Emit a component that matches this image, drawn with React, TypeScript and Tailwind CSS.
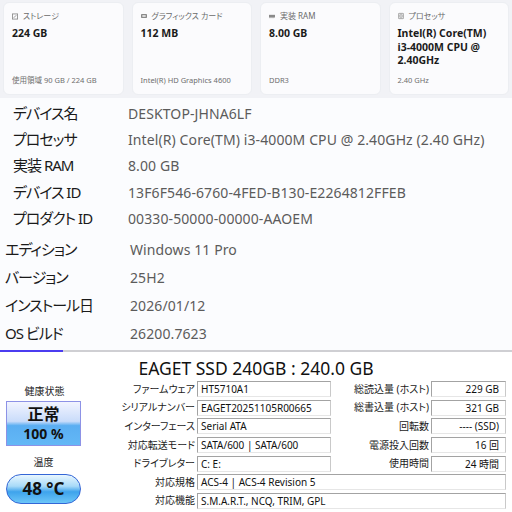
import React from "react";

const F = { fontFamily: '"Noto Sans", "Noto Sans CJK JP", sans-serif' };

function IconStorage() {
  return (
    <svg width="7" height="7" viewBox="0 0 7 7">
      <rect x="0.5" y="0.5" width="6" height="6" fill="none" stroke="#8a8a8a" />
      <path d="M2 5 L5 2" stroke="#8a8a8a" />
    </svg>
  );
}
function IconGpu() {
  return (
    <svg width="9" height="6" viewBox="0 0 9 6">
      <rect x="0" y="0" width="9" height="6" rx="1" fill="#8a8a8a" />
      <rect x="2" y="1.5" width="5" height="3" fill="#d8d8d8" />
    </svg>
  );
}
function IconRam() {
  return (
    <svg width="9" height="5" viewBox="0 0 9 5">
      <rect x="0" y="0" width="9" height="4" fill="#8a8a8a" />
      <path d="M1 4v1M3 4v1M5 4v1M7 4v1" stroke="#8a8a8a" />
    </svg>
  );
}
function IconCpu() {
  return (
    <svg width="8" height="8" viewBox="0 0 8 8">
      <rect x="0.5" y="0.5" width="7" height="7" rx="1" fill="none" stroke="#8a8a8a" />
      <rect x="2.5" y="2.5" width="3" height="3" fill="none" stroke="#8a8a8a" />
    </svg>
  );
}

function Card({
  icon,
  label,
  value,
  sub,
}: {
  icon: React.ReactNode;
  label: string;
  value: React.ReactNode;
  sub: string;
}) {
  return (
    <div className="h-[93px] rounded-[6px] bg-[#fbfbfd] border border-[#eceef2] flex flex-col pl-[8px] pt-[7px] pb-[8px]">
      <div className="flex items-center gap-[5px] h-[12px] text-[8px] text-[#6a6a6a]">
        <span className="w-[6px] flex items-center justify-center">{icon}</span>
        <span className="[font-feature-settings:'palt']">{label}</span>
      </div>
      <div className="mt-[5px] text-[10.5px] font-bold text-[#1b1b1b] leading-[13.5px]">{value}</div>
      <div className="mt-auto text-[7.5px] text-[#6e6e6e] [font-feature-settings:'palt']">{sub}</div>
    </div>
  );
}

function InfoRow({ label, value, h, labelPad, valueLeft }: { label: string; value: string; h: string; labelPad: string; valueLeft: string }) {
  return (
    <div className={`flex items-center ${h}`}>
      <div className={`${labelPad} ${valueLeft} shrink-0 text-[15px] text-[#1a1a1a] [font-feature-settings:'palt'] tracking-[-1px]`}>{label}</div>
      <div className="text-[14px] text-[#5b5b5b] tracking-[0.1px]">{value}</div>
    </div>
  );
}

function Box({ children, right, className }: { children: React.ReactNode; right?: boolean; className?: string }) {
  return (
    <div
      className={`h-[16px] border-t border-l border-[#a3a3a3] border-r border-b border-r-[#c9c9c9] border-b-[#e6e6e6] bg-white flex items-center text-[10px] text-[#111] px-[3px] leading-none ${
        right ? "justify-end pr-[6px]" : ""
      } ${className ?? ""}`}
    >
      {children}
    </div>
  );
}

function Lbl({ children, w }: { children: React.ReactNode; w: string }) {
  return (
    <div className={`${w} shrink-0 text-right pr-[2px] text-[10px] text-[#1a1a1a] [font-feature-settings:'palt'] whitespace-nowrap`}>
      {children}
    </div>
  );
}

export default function App() {
  return (
    <div className="w-[512px] h-[512px] overflow-hidden bg-white flex flex-col" style={F}>
      {/* top cards */}
      <div className="bg-[#f1f2f6] h-[98px] px-[3px] pt-[2px] grid grid-cols-4 gap-[8px]">
        <Card icon={<IconStorage />} label="ストレージ" value="224 GB" sub="使用領域 90 GB / 224 GB" />
        <Card icon={<IconGpu />} label="グラフィックス カード" value="112 MB" sub="Intel(R) HD Graphics 4600" />
        <Card icon={<IconRam />} label="実装 RAM" value="8.00 GB" sub="DDR3" />
        <Card
          icon={<IconCpu />}
          label="プロセッサ"
          value={
            <>
              Intel(R) Core(TM)
              <br />
              i3-4000M CPU @
              <br />
              2.40GHz
            </>
          }
          sub="2.40 GHz"
        />
      </div>

      {/* info section */}
      <div className="bg-[#fbfcfe] h-[252px] flex flex-col">
        <InfoRow h="h-[26.3px] mt-[2px]" labelPad="pl-[13px]" valueLeft="w-[128px]" label="デバイス名" value="DESKTOP-JHNA6LF" />
        <InfoRow h="h-[26.3px]" labelPad="pl-[13px]" valueLeft="w-[128px]" label="プロセッサ" value="Intel(R) Core(TM) i3-4000M CPU @ 2.40GHz (2.40 GHz)" />
        <InfoRow h="h-[26.3px]" labelPad="pl-[13px]" valueLeft="w-[128px]" label="実装 RAM" value="8.00 GB" />
        <InfoRow h="h-[26.3px]" labelPad="pl-[13px]" valueLeft="w-[128px]" label="デバイス ID" value="13F6F546-6760-4FED-B130-E2264812FFEB" />
        <InfoRow h="h-[26.3px]" labelPad="pl-[13px]" valueLeft="w-[128px]" label="プロダクト ID" value="00330-50000-00000-AAOEM" />
        <div className="h-[4px]" />
        <InfoRow h="h-[28px]" labelPad="pl-[5px]" valueLeft="w-[130px]" label="エディション" value="Windows 11 Pro" />
        <InfoRow h="h-[28px]" labelPad="pl-[5px]" valueLeft="w-[130px]" label="バージョン" value="25H2" />
        <InfoRow h="h-[28px]" labelPad="pl-[5px]" valueLeft="w-[130px]" label="インストール日" value="2026/01/12" />
        <InfoRow h="h-[28px]" labelPad="pl-[5px]" valueLeft="w-[130px]" label="OS ビルド" value="26200.7623" />
      </div>
      <div className="flex h-[2px]">
        <div className="w-[63px] bg-[#4b3cf0]" />
        <div className="flex-1 bg-[#cfcfd3]" />
      </div>

      {/* SSD section */}
      <div className="flex-1 bg-white flex flex-col">
        <div className="h-[28px] flex items-end justify-center text-[17.5px] text-[#111] leading-none pb-[3px]">
          EAGET SSD 240GB : 240.0 GB
        </div>
        <div className="flex">
          <div className="w-[87px] shrink-0 flex flex-col items-center">
            <div className="h-[20px] mt-[1px] flex items-center text-[10px] text-[#222] pl-[2px]">健康状態</div>
            <div className="w-[75px] h-[45px] border border-[#8d92e6] bg-[linear-gradient(to_bottom,#f2f4ff_0%,#c9dcfa_45%,#5aaef2_55%,#63b8f6_100%)] flex flex-col items-center justify-center text-[#111] font-bold leading-none">
              <div className="text-[16px]">正常</div>
              <div className="text-[14px] mt-[5px]">100 %</div>
            </div>
            <div className="h-[28px] flex items-center text-[10px] text-[#222] pt-[4px]">温度</div>
            <div className="w-[75px] h-[30px] rounded-full border border-[#3466d6] bg-[linear-gradient(to_bottom,#e8f6ff_0%,#a8daf8_40%,#3ea3ec_60%,#6cc6f8_100%)] flex items-center justify-center text-[17px] font-bold text-[#111]">
              48 °C
            </div>
          </div>
          <div className="flex-1 flex flex-col">
            {[
              ["ファームウェア", "HT5710A1", "総読込量 (ホスト)", "229 GB"],
              ["シリアルナンバー", "EAGET20251105R00665", "総書込量 (ホスト)", "321 GB"],
              ["インターフェース", "Serial ATA", "回転数", "---- (SSD)"],
              ["対応転送モード", "SATA/600 | SATA/600", "電源投入回数", "16 回"],
              ["ドライブレター", "C: E:", "使用時間", "24 時間"],
            ].map((r, i) => (
              <div key={i} className="h-[18.6px] flex items-center">
                <Lbl w="w-[110px]">{r[0]}</Lbl>
                <Box className="w-[134px]">{r[1]}</Box>
                <Lbl w="w-[100px]">{r[2]}</Lbl>
                <Box right className="w-[75px]">{r[3]}</Box>
              </div>
            ))}
            {[
              ["対応規格", "ACS-4 | ACS-4 Revision 5"],
              ["対応機能", "S.M.A.R.T., NCQ, TRIM, GPL"],
            ].map((r, i) => (
              <div key={i} className="h-[18.6px] flex items-center">
                <Lbl w="w-[110px]">{r[0]}</Lbl>
                <Box className="w-[309px]">{r[1]}</Box>
              </div>
            ))}
          </div>
        </div>
      </div>
    </div>
  );
}
